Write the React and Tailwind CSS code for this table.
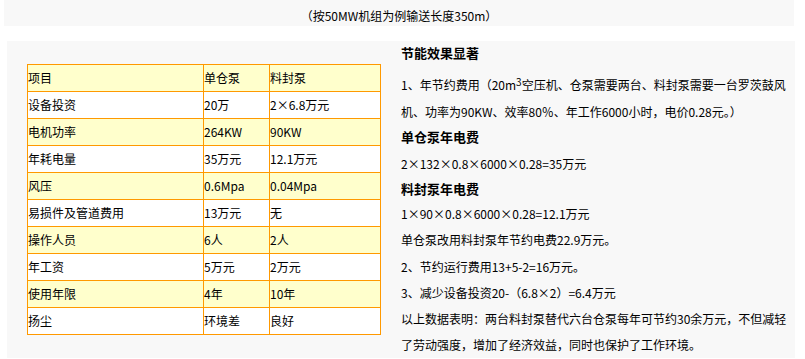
import React from "react";

const rows = [
  ["项目", "单仓泵", "料封泵"],
  ["设备投资", "20万", "2×6.8万元"],
  ["电机功率", "264KW", "90KW"],
  ["年耗电量", "35万元", "12.1万元"],
  ["风压", "0.6Mpa", "0.04Mpa"],
  ["易损件及管道费用", "13万元", "无"],
  ["操作人员", "6人", "2人"],
  ["年工资", "5万元", "2万元"],
  ["使用年限", "4年", "10年"],
  ["扬尘", "环境差", "良好"],
];

export default function App() {
  return (
    <div
      className="w-[805px] h-[359px] bg-white text-black text-[12px] overflow-hidden"
      style={{ fontFamily: '"Noto Sans CJK SC", "Noto Sans", sans-serif' }}
    >
      <div className="ml-[4px] w-[790px] h-[26px] bg-[#f8f8f8] flex items-center justify-center pt-[6px] leading-none">
        （按50MW机组为例输送长度350m）
      </div>
      <div className="ml-[7px] mt-[15px] w-[788px] h-[317px] bg-[#f8f8f8] flex">
        <div className="ml-[20px] mt-[23px] self-start border-l border-t border-[#ff9900] grid grid-cols-[176px_66px_111px]">
          {rows.map((r, i) =>
            r.map((c, j) => (
              <div
                key={i + "-" + j}
                className={
                  "h-[27px] border-r border-b border-[#ff9900] flex items-center whitespace-nowrap leading-none " +
                  (i % 2 === 0 ? "bg-[#ffffcc]" : "bg-white")
                }
              >
                {c}
              </div>
            ))
          )}
        </div>
        <div className="ml-[20px] flex flex-col whitespace-nowrap">
          <div className="h-[24px] flex items-center font-bold text-[13px]">节能效果显著</div>
          <div className="mt-[6px] leading-[27px]">
            1、年节约费用（20m<sup className="text-[10px] -top-[0.4em]">3</sup>空压机、仓泵需要两台、料封泵需要一台罗茨鼓风
            <br />
            机、功率为90KW、效率80％、年工作6000小时，电价0.28元。）
          </div>
          <div className="h-[24px] flex items-center font-bold text-[13px]">单仓泵年电费</div>
          <div className="mt-[2px] h-[26px] flex items-center">2×132×0.8×6000×0.28=35万元</div>
          <div className="h-[24px] flex items-center font-bold text-[13px]">料封泵年电费</div>
          <div className="mt-[1px] h-[26px] flex items-center">1×90×0.8×6000×0.28=12.1万元</div>
          <div className="h-[26px] flex items-center">单仓泵改用料封泵年节约电费22.9万元。</div>
          <div className="mt-[1px] h-[26px] flex items-center">2、节约运行费用13+5-2=16万元。</div>
          <div className="h-[26px] flex items-center">3、减少设备投资20-（6.8×2）=6.4万元</div>
          <div className="leading-[26px]">
            以上数据表明：两台料封泵替代六台仓泵每年可节约30余万元，不但减轻
            <br />
            了劳动强度，增加了经济效益，同时也保护了工作环境。
          </div>
        </div>
      </div>
    </div>
  );
}
